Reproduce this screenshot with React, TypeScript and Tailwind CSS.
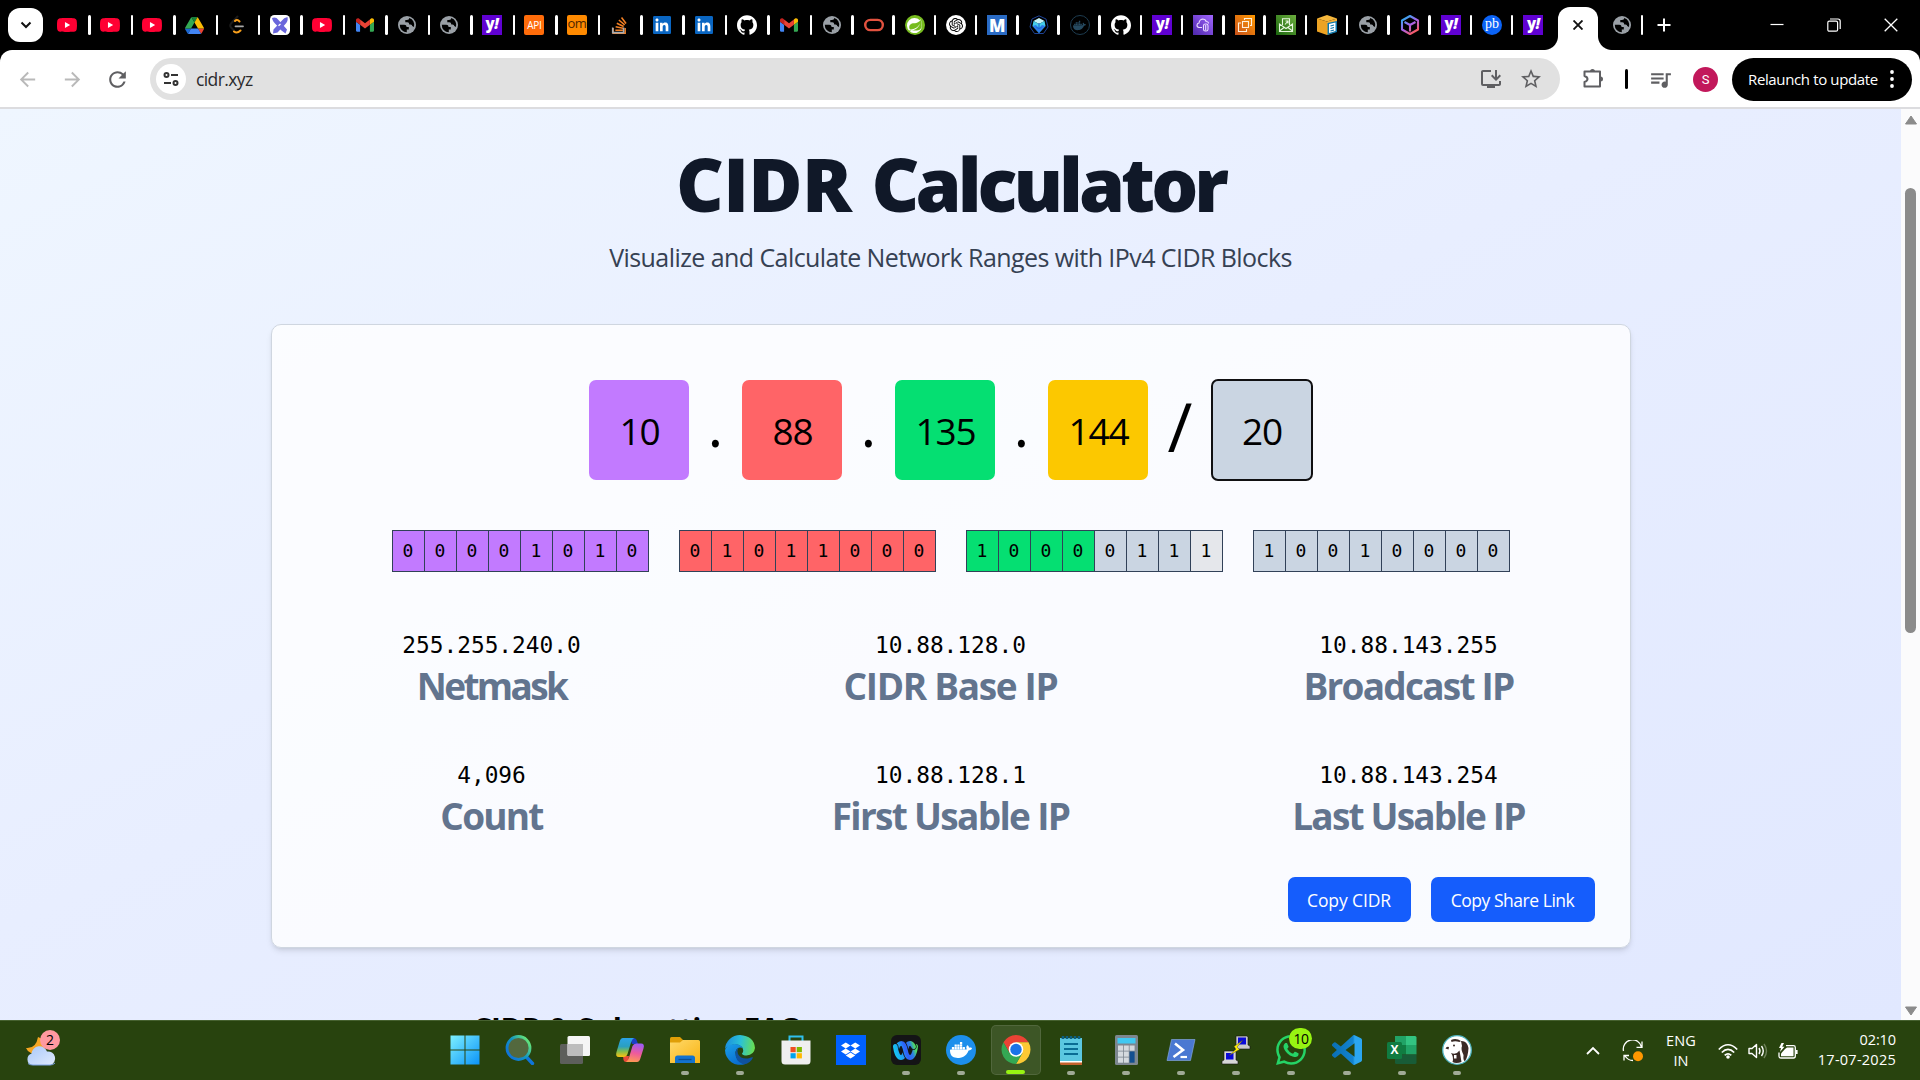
import type { ReactNode } from "react";
import {
  SiYoutube,
  SiStackoverflow,
  SiLinkedin,
  SiGithub,
  SiOracle,
  SiSpring,
  SiOpenai,
  SiDocker,
  SiDropbox,
  SiWebex,
  SiWhatsapp,
} from "react-icons/si";
import { MdInstallDesktop, MdStarBorder, MdQueueMusic, MdRefresh, MdArrowBack, MdArrowForward } from "react-icons/md";

/* ---------- tab favicons ---------- */

function YouTube() {
  return (
    <span className="relative flex size-5 items-center justify-center">
      <span className="absolute h-2 w-3 bg-white" />
      <SiYoutube className="relative size-5 text-[#ff0033]" />
    </span>
  );
}

function Drive() {
  return (
    <svg viewBox="0 0 87.3 78" className="h-[17px] w-[19px]">
      <path d="m6.6 66.85 3.85 6.65c.8 1.4 1.95 2.5 3.3 3.3l13.75-23.8h-27.5c0 1.55.4 3.1 1.2 4.5z" fill="#1967d2" />
      <path d="m43.65 25-13.75-23.8c-1.35.8-2.5 1.9-3.3 3.3l-25.4 44a9.06 9.06 0 0 0 -1.2 4.5h27.5z" fill="#34a853" />
      <path d="m73.55 76.8c1.35-.8 2.5-1.9 3.3-3.3l1.6-2.75 7.65-13.25c.8-1.4 1.2-2.95 1.2-4.5h-27.5l5.85 11.5z" fill="#ea4335" />
      <path d="m43.65 25 13.75-23.8c-1.35-.8-2.9-1.2-4.5-1.2h-18.5c-1.6 0-3.15.45-4.5 1.2z" fill="#188038" />
      <path d="m59.8 53h-32.3l-13.75 23.8c1.35.8 2.9 1.2 4.5 1.2h50.8c1.6 0 3.15-.45 4.5-1.2z" fill="#4285f4" />
      <path d="m73.4 26.5-12.7-22c-.8-1.4-1.95-2.5-3.3-3.3l-13.75 23.8 16.15 28h27.45c0-1.55-.4-3.1-1.2-4.5z" fill="#fbbc04" />
    </svg>
  );
}

function Leet() {
  return (
    <svg viewBox="0 0 20 20" className="size-5" fill="none" strokeLinecap="round">
      <path d="M10.5 1.5 4 8.5Q2.500 10.500 4 12.500L7 15.500" stroke="#1c1c1c" strokeWidth="2" />
      <path d="M8 6Q10 3.800 12.500 6.500M7 16.500Q10 19 13.500 15.500" stroke="#f89f1b" strokeWidth="2" />
      <path d="M8.500 11.300H16" stroke="#a8a8a8" strokeWidth="1.800" />
    </svg>
  );
}

function Excalidraw() {
  return (
    <svg viewBox="0 0 20 20" className="size-5">
      <rect width="20" height="20" rx="4.500" fill="#fff" />
      <path d="M2 3Q6 1.500 8.500 5L17 14.500 15.500 18.500Q9.500 14.500 7 10.500 2.500 6.500 2 3Z" fill="#6965db" />
      <path d="M17.500 2Q18.500 6 15 9.500L7.500 17.500 3 18.500 3.500 14.500 11.500 6Q14 2.500 17.500 2Z" fill="#6965db" />
      <path d="M8.500 10.800 10.500 9" stroke="#fff" strokeWidth="1.200" />
    </svg>
  );
}

function Gmail() {
  return (
    <svg viewBox="52 42 88 66" className="h-[14px] w-[18px]">
      <path fill="#4285f4" d="M58 108h14V74L52 59v43c0 3.320 2.690 6 6 6" />
      <path fill="#34a853" d="M120 108h14c3.320 0 6-2.690 6-6V59l-20 15" />
      <path fill="#fbbc04" d="M120 48v26l20-15v-8c0-7.420-8.470-11.650-14.400-7.200" />
      <path fill="#ea4335" d="M72 74V48l24 18 24-18v26L96 92" />
      <path fill="#c5221f" d="M52 51v8l20 15V48l-5.600-4.200c-5.940-4.450-14.400-.22-14.400 7.200" />
    </svg>
  );
}

function Globe() {
  return (
    <svg viewBox="0 0 20 20" className="size-5">
      <circle cx="10" cy="10" r="9" fill="#9aa0a6" />
      <path d="M2.800 9.700H7.200Q9.600 9.700 9.600 12H11.800V14.400H9.800V17.300A7.300 7.300 0 0 1 2.800 9.700Z" fill="#000" />
      <path d="M12.300 3Q12.200 5 10 5H8.300V7.300H10.300Q12.300 7.300 12.300 9.500H13.600Q15.200 9.500 15.200 11L17 12A7.400 7.400 0 0 0 12.300 3Z" fill="#000" />
    </svg>
  );
}

function Yahoo() {
  return (
    <span className="flex size-5 items-center justify-center bg-[#6001d2] font-['Open_Sans',sans-serif] text-[15px] font-extrabold leading-none tracking-[-0.5px] text-white">
      <span className="-mt-1">y</span>
      <span className="-mt-1 italic">!</span>
    </span>
  );
}

function Api() {
  return (
    <span className="flex size-5 items-center justify-center rounded-[2px] bg-[#ff6c0a] text-[10px] leading-none tracking-[-0.3px] text-white">
      API
    </span>
  );
}

function Om() {
  return (
    <span className="flex size-5 items-center justify-center rounded-[2px] bg-[#ff8a00] pb-[3px] text-[13px] leading-none tracking-[-0.6px] text-[#4c2500]">
      om
    </span>
  );
}

function StackOverflow() {
  return (
    <span className="relative flex size-5 items-center justify-center overflow-hidden">
      <SiStackoverflow className="size-[17px] text-[#f48024]" />
      <svg viewBox="0 0 20 20" className="absolute inset-0 size-5" fill="none">
        <path d="M3.700 12.600V17.600H14.600V12.600" stroke="#a7acb1" strokeWidth="1.600" />
      </svg>
    </span>
  );
}

function LinkedIn() {
  return (
    <span className="relative flex size-5 items-center justify-center">
      <span className="absolute size-4 bg-white" />
      <SiLinkedin className="relative size-[18px] text-[#0a66c2]" />
    </span>
  );
}

const GitHub = () => <SiGithub className="size-5 text-white" />;
const Oracle = () => <SiOracle className="size-5 text-[#e2523f]" />;

function Spring() {
  return (
    <span className="flex size-5 items-center justify-center rounded-full bg-[#77bc1f]">
      <SiSpring className="size-[15px] text-white" />
    </span>
  );
}

function OpenAi() {
  return (
    <span className="flex size-5 items-center justify-center rounded-full bg-white">
      <SiOpenai className="size-[14px] text-black" />
    </span>
  );
}

function LetterM() {
  return (
    <span className="flex size-5 items-center justify-center bg-[#2a6bc4] font-['Open_Sans',sans-serif] text-[17px] font-extrabold leading-none text-white">
      M
    </span>
  );
}

function Kube() {
  return (
    <svg viewBox="0 0 20 20" className="size-5">
      <path d="M10 .8 17 4 19 12 14.500 18.500H5.500L1 12 3 4Z" fill="none" stroke="#1d4396" strokeWidth="1" />
      <path d="M10 3 15.500 6 10 9 4.500 6Z" fill="#c7f3f7" />
      <path d="M4.500 6 10 9 15.500 6 16.500 11 10 18 3.500 11Z" fill="#45cdec" />
      <path d="M3.500 11 10 18 16.500 11 13 10 10 13 7 10Z" fill="#2d7be8" />
      <path d="M10 8V14M7.500 12Q10 15 12.500 12" stroke="#1c64d4" strokeWidth="1.100" fill="none" />
    </svg>
  );
}

function DarkDocker() {
  return (
    <span className="flex size-5 items-center justify-center rounded-full border border-[#1d3c50]">
      <SiDocker className="size-[13px] text-[#264a60]" />
    </span>
  );
}

function AwsCloud() {
  return (
    <svg viewBox="0 0 20 20" className="size-5" fill="none" stroke="#eadcff" strokeWidth="1.100">
      <rect width="20" height="20" fill="url(#awsPurple)" stroke="none" />
      <defs>
        <linearGradient id="awsPurple" x1="0" y1="1" x2="1" y2="0">
          <stop stopColor="#4d27aa" />
          <stop offset="1" stopColor="#a166ff" />
        </linearGradient>
      </defs>
      <path d="M9 12.500H6Q3.800 12 4 10 4.200 8.300 6 8 6.500 4.500 9.500 4 12.300 4 13.200 6.500 15.500 6.500 15.500 8.500" />
      <rect x="10.500" y="9" width="4.500" height="7" rx="1.800" />
      <path d="M12.700 10V15.500" />
    </svg>
  );
}

function AwsEc2() {
  return (
    <svg viewBox="0 0 20 20" className="size-5" fill="none" stroke="#fff1dd" strokeWidth="1.100">
      <defs>
        <linearGradient id="awsOrange" x1="0" y1="1" x2="1" y2="0">
          <stop stopColor="#c8511b" />
          <stop offset="1" stopColor="#ff9900" />
        </linearGradient>
      </defs>
      <rect width="20" height="20" fill="url(#awsOrange)" stroke="none" />
      <rect x="7.500" y="6.500" width="6" height="6" />
      <path d="M9.500 5V3.500H16.500V10.500H15M6 8H3.500V16.500H11.500V14" />
    </svg>
  );
}

function AwsMail() {
  return (
    <svg viewBox="0 0 20 20" className="size-5" fill="none" stroke="#e8f7e0" strokeWidth="1.100">
      <defs>
        <linearGradient id="awsGreen" x1="0" y1="1" x2="1" y2="0">
          <stop stopColor="#1b660f" />
          <stop offset="1" stopColor="#6cae3e" />
        </linearGradient>
      </defs>
      <rect width="20" height="20" fill="url(#awsGreen)" stroke="none" />
      <path d="M6.500 10V3.800H13.500V10M3.500 9V16.500H16.500V9L10 13.500ZM3.500 16 8 12.500M16.500 16 12 12.500M9 9.500 12 6M9.500 6H12V8.500" />
    </svg>
  );
}

function S3Box() {
  return (
    <svg viewBox="0 0 20 20" className="size-5">
      <path d="M0 3.500 10 0 20 3.500 10 6.500Z" fill="#f6b73c" />
      <path d="M0 3.500 10 6.500V20L0 16.500Z" fill="#eda323" />
      <path d="M10 6.500 20 3.500V16.500L10 20Z" fill="#f3b13a" />
      <path d="M10.500 8 20 6V17L10.500 20Z" fill="#0b76ad" />
      <path d="M12 9 18.500 7.500V16L12 18Z" fill="#fff" />
      <path d="M13.500 11 17 10M13.500 13.500 17 12.500M13.500 16 17 15" stroke="#0b76ad" strokeWidth="1.100" />
    </svg>
  );
}

function HexCube() {
  return (
    <svg viewBox="0 0 20 20" className="size-5" fill="none" stroke="url(#hexGrad)" strokeWidth="2.100" strokeLinejoin="round">
      <defs>
        <linearGradient id="hexGrad" gradientUnits="userSpaceOnUse" x1="3" y1="2" x2="15" y2="18">
          <stop stopColor="#23b4f0" />
          <stop offset="0.500" stopColor="#a463ee" />
          <stop offset="1" stopColor="#ff5a5a" />
        </linearGradient>
      </defs>
      <path d="M10 1 18 5.500V14.500L10 19 2 14.500V5.500ZM4.500 7 10 10 15.500 7M10 10V16.500" />
    </svg>
  );
}

function Pb() {
  return (
    <span className="flex size-5 items-center justify-center rounded-full bg-[#0b63f6] pb-[3px] font-['Liberation_Serif',serif] text-[14px] leading-none text-white">
      pb
    </span>
  );
}

const wideTabs = [YouTube, YouTube, YouTube, Drive, Leet, Excalidraw, YouTube, Gmail, Globe, Globe, Yahoo, Api, Om, StackOverflow, LinkedIn, LinkedIn, GitHub, Gmail];
const narrowTabs = [Globe, Oracle, Spring, OpenAi, LetterM, Kube, DarkDocker, GitHub, Yahoo, AwsCloud, AwsEc2, AwsMail, S3Box, Globe, HexCube, Yahoo, Pb, Yahoo];

const Separator = () => <span className="h-5 w-[2.5px] rounded-full bg-white" />;

function TabStrip() {
  return (
    <div className="flex h-[50px] items-center bg-black">
      <div className="ml-2 mr-[5.200px] flex h-[34px] w-[35px] items-center justify-center rounded-[12px] bg-white">
        <svg viewBox="0 0 12 12" className="size-3" fill="none" stroke="#111" strokeWidth="2">
          <path d="M1.500 3.500 6 8 10.500 3.500" />
        </svg>
      </div>
      {wideTabs.map((Icon, i) => (
        <div key={i} className="flex w-[42.460px] shrink-0 items-center justify-between pl-[9.200px]">
          <span className="flex size-5 items-center justify-center">
            <Icon />
          </span>
          <Separator />
        </div>
      ))}
      {narrowTabs.map((Icon, i) => (
        <div key={i} className="flex w-[41.240px] shrink-0 items-center justify-between pl-[10px]">
          <span className="flex size-5 items-center justify-center">
            <Icon />
          </span>
          {i < narrowTabs.length - 1 && <Separator />}
        </div>
      ))}
      <div className="-ml-[11px] flex h-full items-end">
        <span className="size-[14px] bg-[radial-gradient(circle_at_0_0,#000_13.500px,#fff_14.500px)]" />
        <div className="flex h-[43px] w-10 items-center justify-center rounded-t-[12px] bg-white pb-[7px]">
          <svg viewBox="0 0 10 10" className="size-[10px]" stroke="#111" strokeWidth="1.900">
            <path d="M.5.5 9.500 9.500M9.500.5.5 9.500" />
          </svg>
        </div>
        <span className="size-[14px] bg-[radial-gradient(circle_at_100%_0,#000_13.500px,#fff_14.500px)]" />
      </div>
      <div className="flex items-center gap-[9px]">
        <Globe />
        <Separator />
      </div>
      <svg viewBox="0 0 14 14" className="ml-[14px] size-[14px]" stroke="#fff" strokeWidth="2">
        <path d="M7 .5V13.500M.5 7H13.500" />
      </svg>
      <div className="ml-auto mr-[22px] flex items-center gap-[43px]">
        <svg viewBox="0 0 14 14" className="size-[14px]" stroke="#fff" strokeWidth="1.200">
          <path d="M.5 6.500H13.500" />
        </svg>
        <svg viewBox="0 0 14 14" className="size-[14px]" fill="none" stroke="#fff" strokeWidth="1.200">
          <rect x="0.800" y="3.200" width="9.800" height="10" rx="1.500" />
          <path d="M3 1H11Q13.200 1 13.200 3.200V11" />
        </svg>
        <svg viewBox="0 0 14 14" className="size-[14px]" stroke="#fff" strokeWidth="1.300">
          <path d="M.7.7 13.300 13.300M13.300.7.7 13.300" />
        </svg>
      </div>
    </div>
  );
}

function Toolbar() {
  return (
    <div className="bg-black">
      <div className="flex h-[59px] items-center rounded-t-[12px] border-b-2 border-[#dcdcdf] bg-white pl-4 pt-px text-[#5f5f62]">
        <MdArrowBack className="size-[23px] text-[#b9b9b9]" />
        <MdArrowForward className="ml-[22px] size-[23px] text-[#b9b9b9]" />
        <MdRefresh className="ml-[21px] size-[25px]" />
        <div className="ml-5 flex h-[42px] w-[1410px] items-center rounded-full bg-[#e1e1e1] pl-[6px] pr-[17px]">
          <span className="flex size-[30px] items-center justify-center rounded-full bg-white">
            <svg viewBox="0 0 16 16" className="size-4" fill="none" stroke="#333" strokeWidth="2">
              <circle cx="3.500" cy="4" r="2" />
              <path d="M8 4H15M1 12H8" />
              <circle cx="12.500" cy="12" r="2" />
            </svg>
          </span>
          <span className="ml-[10px] pt-[2px] text-[17.500px] leading-none tracking-[-0.600px] text-[#2b2b2e]">cidr.xyz</span>
          <MdInstallDesktop className="ml-auto size-6" />
          <MdStarBorder className="ml-4 size-6" />
        </div>
        <svg viewBox="0 0 22 22" className="ml-[22px] size-[22px]" fill="none" stroke="currentColor" strokeWidth="2">
          <path d="M2.500 3.500H18V18.500H2.500V14Q5.500 13 5.500 11T2.500 8Z" strokeLinejoin="round" />
          <path d="M8 3.500A2.500 2.500 0 0 1 13 3.500ZM18.500 8.500A2.500 2.500 0 0 1 18.500 13.500Z" fill="currentColor" stroke="none" />
        </svg>
        <span className="ml-[21px] h-5 w-[3px] rounded-full bg-black" />
        <MdQueueMusic className="ml-[20px] size-[25px]" />
        <span className="ml-[20px] flex size-[25px] items-center justify-center rounded-full bg-[#c2185b] font-[Roboto,sans-serif] text-[13px] leading-none text-white">
          S
        </span>
        <div className="ml-[14px] flex h-[43px] w-[180px] items-center rounded-full bg-black pl-4">
          <span className="whitespace-nowrap text-[15px] leading-none tracking-[-0.370px] text-white">Relaunch to update</span>
          <svg viewBox="0 0 4 20" className="ml-[12px] h-5 w-1" fill="#fff">
            <circle cx="2" cy="3" r="1.900" />
            <circle cx="2" cy="10" r="1.900" />
            <circle cx="2" cy="17" r="1.900" />
          </svg>
        </div>
      </div>
    </div>
  );
}

/* ---------- page ---------- */

const octets = [
  { value: "10", bg: "bg-[#c27aff]" },
  { value: "88", bg: "bg-[#ff6467]" },
  { value: "135", bg: "bg-[#05df72]" },
  { value: "144", bg: "bg-[#fcc800]" },
];

const P = "bg-[#c27aff]";
const R = "bg-[#ff6467]";
const G = "bg-[#05df72]";
const S = "bg-[#cad5e2]";
const bits: { digits: string; colors: string[] }[] = [
  { digits: "00001010", colors: [P, P, P, P, P, P, P, P] },
  { digits: "01011000", colors: [R, R, R, R, R, R, R, R] },
  { digits: "10000111", colors: [G, G, G, G, S, S, S, "bg-[#e5e7eb]"] },
  { digits: "10010000", colors: [S, S, S, S, S, S, S, S] },
];

const stats = [
  ["255.255.240.0", "Netmask", "tracking-[-2.650px]"],
  ["10.88.128.0", "CIDR Base IP", "tracking-[-1.330px]"],
  ["10.88.143.255", "Broadcast IP", "tracking-[-1.770px]"],
  ["4,096", "Count", "tracking-[-1.780px]"],
  ["10.88.128.1", "First Usable IP", "tracking-[-1.690px]"],
  ["10.88.143.254", "Last Usable IP", "tracking-[-1.800px]"],
];

function Calculator() {
  return (
    <section className="mt-[51px] flex h-[624px] w-[1360px] shrink-0 flex-col rounded-[10px] border border-[#cfd6e0] bg-white/80 pt-[55px] shadow-md">
      <div className="flex items-start justify-center">
        {octets.map((o, i) => (
          <div key={o.value} className="flex items-start">
            <div className={`flex size-[100px] items-center justify-center rounded-[7px] pl-px text-[37px] leading-none tracking-[-1.200px] text-black ${o.bg}`}>
              {o.value}
            </div>
            {i < 3 ? (
              <span className="w-[53px] text-center text-[60px] leading-[88px]">.</span>
            ) : (
              <span className="w-[64px] text-center text-[68px] leading-[91px]">/</span>
            )}
          </div>
        ))}
        <div className="flex size-[100px] items-center justify-center rounded-[6px] bg-[#cad5e2] text-[37px] leading-none tracking-[-1.200px] text-black outline-2 -outline-offset-1 outline-[#101012]">
          20
        </div>
      </div>

      <div className="mt-[50px] flex justify-center gap-[30px] font-['DejaVu_Sans_Mono',monospace] text-[18px]">
        {bits.map((b, i) => (
          <div key={i} className="flex h-[42px] w-[257px] border border-[#314158]">
            {b.digits.split("").map((d, j) => (
              <span key={j} className={`flex flex-1 items-center justify-center border-[#314158] leading-none not-first:border-l ${b.colors[j]}`}>
                {d}
              </span>
            ))}
          </div>
        ))}
      </div>

      <div className="mt-[59px] grid grid-cols-[440px_478px_438px] gap-y-14">
        {stats.map(([value, label, tracking]) => (
          <div key={label} className="text-center">
            <p className="font-['DejaVu_Sans_Mono',monospace] text-[22.800px] leading-7">{value}</p>
            <p className={`mt-[7px] text-[37px] font-bold leading-[39px] text-[#62748e] ${tracking}`}>{label}</p>
          </div>
        ))}
      </div>

      <div className="mr-[35px] mt-[42px] flex justify-end gap-5 text-[17.500px] leading-none text-white">
        <button className="h-[45px] w-[123px] rounded-[7px] bg-[#155dfc] pt-[2px] tracking-[-0.100px]">Copy CIDR</button>
        <button className="h-[45px] w-[164px] whitespace-nowrap rounded-[7px] bg-[#155dfc] pt-[2px] tracking-[-0.460px]">Copy Share Link</button>
      </div>
    </section>
  );
}

function Page() {
  return (
    <div className="flex h-[911px]">
      <main className="flex w-[1901px] flex-col items-center overflow-hidden bg-[linear-gradient(to_bottom_right,#eff6ff,#e8eeff_45%,#e1e8ff)]">
        <h1 className="mt-[38px] shrink-0 text-[74px] font-extrabold leading-[74px] text-[#101828]">
          <span className="tracking-[-0.700px]">CIDR</span>
          <span className="tracking-[1px]"> </span>
          <span className="tracking-[-4px]">Calculator</span>
        </h1>
        <p className="mt-[20px] shrink-0 text-[25px] leading-8 tracking-[-0.570px] text-[#364153]">
          Visualize and Calculate Network Ranges with IPv4 CIDR Blocks
        </p>
        <Calculator />
        <h2 className="mt-[61px] w-[956px] shrink-0 text-[30px] font-bold leading-10 tracking-[-0.580px] text-black">CIDR &amp; Subnetting FAQ</h2>
      </main>
      <aside className="flex w-[19px] flex-col items-center bg-[#fbfbfc] pt-[6px]">
        <svg viewBox="0 0 14 10" className="h-[10px] w-[14px]" fill="#8b8b8b" stroke="#8b8b8b" strokeLinejoin="round">
          <path d="M7 1 12.500 9H1.500Z" />
        </svg>
        <span className="mt-[63px] h-[445px] w-[11px] rounded-full bg-[#8b8b8b]" />
        <svg viewBox="0 0 14 10" className="mb-1 mt-auto h-[10px] w-[14px]" fill="#8b8b8b" stroke="#8b8b8b" strokeLinejoin="round">
          <path d="M7 9 12.500 1H1.500Z" />
        </svg>
      </aside>
    </div>
  );
}

/* ---------- taskbar icons ---------- */

function StartIcon() {
  return (
    <svg viewBox="0 0 30 30" className="size-[30px]">
      <defs>
        <linearGradient id="win" x1="0" y1="0" x2="1" y2="1" gradientUnits="objectBoundingBox">
          <stop stopColor="#7df0ff" />
          <stop offset="1" stopColor="#0b93f8" />
        </linearGradient>
      </defs>
      <path fill="url(#win)" d="M.5.5H14.500V14.500H.5ZM15.500.5H29.500V14.500H15.500ZM.5 15.500H14.500V29.500H.5ZM15.500 15.500H29.500V29.500H15.500Z" />
    </svg>
  );
}

function SearchIcon() {
  return (
    <svg viewBox="0 0 30 30" className="size-[30px]" fill="none" strokeLinecap="round">
      <defs>
        <linearGradient id="lens" x1="0.100" y1="0.800" x2="0.900" y2="0.200">
          <stop stopColor="#0f75d8" />
          <stop offset="0.500" stopColor="#1295c0" />
          <stop offset="1" stopColor="#5fe07d" />
        </linearGradient>
      </defs>
      <path d="M21.500 22 27.500 28.500" stroke="#0f75d8" strokeWidth="3.400" />
      <circle cx="13.500" cy="13" r="11.500" fill="#ffffff33" stroke="url(#lens)" strokeWidth="2.800" />
    </svg>
  );
}

function TaskViewIcon() {
  return (
    <svg viewBox="0 0 30 30" className="size-[30px]">
      <rect x="0" y="9" width="23" height="20" rx="1.500" fill="#5d5f5b" />
      <rect x="7.500" y="1" width="22.500" height="20" rx="1.500" fill="#f5f5f5" />
      <path d="M7.500 9H23V21H9Q7.500 21 7.500 19.500Z" fill="#bdbdbd" />
    </svg>
  );
}

function CopilotIcon() {
  return (
    <svg viewBox="0 0 30 30" className="size-[30px]">
      <defs>
        <linearGradient id="cpA" x1="0" y1="0" x2="0" y2="1">
          <stop stopColor="#2ba4e8" />
          <stop offset="0.450" stopColor="#2a9fc0" />
          <stop offset="0.700" stopColor="#7fbd4e" />
          <stop offset="1" stopColor="#ffc20e" />
        </linearGradient>
        <linearGradient id="cpB" x1="0.500" y1="0" x2="0.300" y2="1">
          <stop stopColor="#a05bf2" />
          <stop offset="0.500" stopColor="#ee5a9c" />
          <stop offset="1" stopColor="#ff9a52" />
        </linearGradient>
      </defs>
      <path d="M15 3H18.500Q21 3 22 6L23 9H17Z" fill="#1c3fc6" />
      <path d="M8 21H14L13 27H11Q9 27 8.500 25Z" fill="#e84a3a" />
      <path d="M8 3H19Q17 4 16 7.500L12.500 19Q11.500 22 8.500 22H4Q0 22 1.500 17L4.500 7Q5.500 3 8 3Z" fill="url(#cpA)" />
      <path d="M22 27H11Q13 26 14 22.500L17.500 11Q18.500 8.500 21.500 8.500H26Q30 8.500 28.500 13.500L25.500 23Q24.500 27 22 27Z" fill="url(#cpB)" />
    </svg>
  );
}

function FolderIcon() {
  return (
    <svg viewBox="0 0 30 30" className="size-[30px]">
      <defs>
        <linearGradient id="folder" x1="0" y1="0" x2="1" y2="1">
          <stop stopColor="#ffd96a" />
          <stop offset="1" stopColor="#f9b413" />
        </linearGradient>
      </defs>
      <path d="M0 3.500Q0 2 1.500 2H10L13 5V9H0Z" fill="#e09f07" />
      <path d="M0 7.500H10L13 5H28.500Q30 5 30 6.500V28H0Z" fill="url(#folder)" />
      <path d="M5 28V23Q5 20.500 7.500 20.500H22.500Q25 20.500 25 23V28Z" fill="#1373cf" />
      <path d="M8.500 24.500H21.500" stroke="#0b4f93" strokeWidth="1.300" />
    </svg>
  );
}

function EdgeIcon() {
  return (
    <svg viewBox="0 0 30 30" className="size-[30px]">
      <defs>
        <linearGradient id="edgeTop" x1="0" y1="0.500" x2="1" y2="0.600">
          <stop stopColor="#1b8fe0" />
          <stop offset="0.500" stopColor="#2bc2d6" />
          <stop offset="1" stopColor="#6be04b" />
        </linearGradient>
        <linearGradient id="edgeLeft" x1="0" y1="0" x2="0.500" y2="1">
          <stop stopColor="#1aa0e8" />
          <stop offset="1" stopColor="#0a6fd0" />
        </linearGradient>
      </defs>
      <path d="M0 14A15 15 0 0 1 15 0Q29 1 30 13 29 20 21.500 20.500 17.500 20.500 17 18.500 19.500 16 17 12 13.500 8.500 8.500 9.500 2 11 0 14Z" fill="url(#edgeTop)" />
      <path d="M0 15Q2 9 9.500 9 15 9 18 13 12 11 10.500 17 10 26 20 29A15 15 0 0 1 0 15Z" fill="url(#edgeLeft)" />
      <path d="M10.500 17Q9.500 26 18.500 29.600 25.500 28.500 28 22.500 27 22 24 23.300 16 24.500 13 19Q11.500 16 13.500 13 11 14 10.500 17Z" fill="#0f529f" />
    </svg>
  );
}

function StoreIcon() {
  return (
    <svg viewBox="0 0 30 30" className="size-[30px]">
      <path d="M8.500 6.500V1.500H21.500V6.500" fill="none" stroke="#2fc0ec" strokeWidth="2" />
      <path d="M.5 5.500H29.500V26Q29.500 29.500 26 29.500H4Q.5 29.500.5 26Z" fill="#efefef" />
      <rect x="9.500" y="12" width="5.200" height="5.200" fill="#f04e23" />
      <rect x="15.700" y="12" width="5.200" height="5.200" fill="#7eb900" />
      <rect x="9.500" y="18.200" width="5.200" height="5.200" fill="#00a3ee" />
      <rect x="15.700" y="18.200" width="5.200" height="5.200" fill="#ffb800" />
    </svg>
  );
}

function DropboxIcon() {
  return (
    <span className="flex size-[30px] items-center justify-center bg-[#0061ff]">
      <SiDropbox className="size-[19px] text-white" />
    </span>
  );
}

function WebexIcon() {
  return (
    <span className="flex size-[30px] items-center justify-center rounded-[6px] bg-[#141416]">
      <svg className="size-0">
        <defs>
          <linearGradient id="webex" gradientUnits="userSpaceOnUse" x1="1" y1="14" x2="23" y2="7">
            <stop stopColor="#15c8f2" />
            <stop offset="0.300" stopColor="#1f9df5" />
            <stop offset="0.500" stopColor="#2f5ffa" />
            <stop offset="0.720" stopColor="#2b7be8" />
            <stop offset="0.900" stopColor="#4fdc64" />
          </linearGradient>
        </defs>
      </svg>
      <SiWebex className="size-[25px] shrink-0" fill="url(#webex)" />
    </span>
  );
}

function DockerIcon() {
  return (
    <span className="flex size-[30px] items-center justify-center rounded-full bg-[#1d8fec]">
      <SiDocker className="size-[22px] text-white" />
    </span>
  );
}

function ChromeIcon() {
  return (
    <svg viewBox="0 0 48 48" className="size-[30px]">
      <path d="M3.220 12A24 24 0 0 1 44.780 12H24L13.600 30Z" fill="#ea4335" />
      <path d="M44.780 12A24 24 0 0 1 24 48L34.400 30 24 12Z" fill="#fcc934" />
      <path d="M24 48A24 24 0 0 1 3.220 12L13.600 30H34.400Z" fill="#34a853" />
      <circle cx="24" cy="24" r="12" fill="#fff" />
      <circle cx="24" cy="24" r="9.500" fill="#1a73e8" />
    </svg>
  );
}

function NotepadIcon() {
  return (
    <svg viewBox="0 0 30 30" className="size-[30px]">
      <path d="M4 26H26V30H5.500Q4 30 4 28.500Z" fill="#c4622d" />
      <path d="M4 24H26V27.500H4Z" fill="#fff" />
      <path d="M4 3H26V26H4Z" fill="#5bc7e0" />
      <path d="M7 1V4M11 1V4M15 1V4M19 1V4M23 1V4" stroke="#0c5f80" strokeWidth="2.600" />
      <path d="M8 9H22M8 14H22M8 19H22" stroke="#0a6d94" strokeWidth="1.800" />
    </svg>
  );
}

function CalcIcon() {
  const keys: ReactNode[] = [];
  for (let r = 0; r < 3; r++) {
    for (let c = 0; c < 3; c++) {
      if (c < 2 || r === 0) keys.push(<rect key={`${r}${c}`} x={7 + c * 5.800} y={10.500 + r * 6} width="5" height="5.200" fill="#d4dade" />);
    }
  }
  return (
    <svg viewBox="0 0 30 30" className="size-[30px]">
      <rect x="4" y="0" width="23" height="30" rx="1.500" fill="#7d8790" />
      <rect x="6.500" y="3" width="18" height="5.500" fill="#3fc9f2" />
      {keys}
      <rect x="18.600" y="16.500" width="5" height="11.200" fill="#134f8f" />
    </svg>
  );
}

function PowerShellIcon() {
  return (
    <svg viewBox="0 0 30 30" className="size-[30px]" fill="none">
      <path d="M5.500 4.500H29L24.500 25.500H1Z" fill="#4a78d2" stroke="#8fb0ea" strokeWidth="0.600" />
      <path d="M9 8.500 17 15 7.500 22" stroke="#fff" strokeWidth="2.600" />
      <path d="M14.500 22H21" stroke="#fff" strokeWidth="2.200" />
    </svg>
  );
}

function PuttyIcon() {
  return (
    <svg viewBox="0 0 30 30" className="size-[30px]">
      <path d="M15 1H26L27 2V10L29 11V14H14V11L15 10Z" fill="#c9c9c9" stroke="#111" strokeWidth="0.600" />
      <rect x="17" y="2.500" width="8" height="7" fill="#0a0ad8" />
      <path d="M3 16H14L15 17V25L17 26V29H1V26L3 25Z" fill="#d6d6d6" stroke="#111" strokeWidth="0.600" />
      <rect x="5" y="18" width="7.500" height="6.500" fill="#0a0ad8" />
      <path d="M22 5 13 11.500 15 14 8 20.500 18.500 14.500 16 12Z" fill="#ffee00" stroke="#333" strokeWidth="0.400" />
    </svg>
  );
}

function WhatsappIcon() {
  return (
    <span className="relative">
      <SiWhatsapp className="size-[30px] text-[#25d366]" />
      <span className="absolute -top-[7px] left-[13px] flex h-[21px] w-[23px] items-center justify-center rounded-full bg-[#97f412] text-[14px] leading-none tracking-[-0.500px] text-black">
        10
      </span>
    </span>
  );
}

function VsCodeIcon() {
  return (
    <svg viewBox="0 0 24 24" className="size-[30px]">
      <defs>
        <linearGradient id="code" x1="0" y1="0" x2="1" y2="0">
          <stop stopColor="#0a6fb5" />
          <stop offset="0.700" stopColor="#1283cf" />
          <stop offset="0.760" stopColor="#2ba6f0" />
        </linearGradient>
      </defs>
      <path
        fill="url(#code)"
        d="M23.150 2.587L18.210.21a1.494 1.494 0 0 0-1.705.29l-9.460 8.630-4.120-3.128a.999.999 0 0 0-1.276.057L.327 7.261A1 1 0 0 0 .326 8.740L3.899 12 .326 15.260a1 1 0 0 0 .001 1.479L1.650 17.940a.999.999 0 0 0 1.276.057l4.120-3.128 9.460 8.630a1.492 1.492 0 0 0 1.704.29l4.942-2.377A1.500 1.500 0 0 0 24 20.060V3.939a1.500 1.500 0 0 0-.85-1.352zm-5.146 14.861L10.826 12l7.178-5.448v10.896z"
      />
    </svg>
  );
}

function ExcelIcon() {
  return (
    <span className="relative flex size-[30px] items-center">
      <svg viewBox="0 0 30 30" className="absolute inset-0 size-[30px]">
        <path d="M8 1H19V10H8Z" fill="#21a366" />
        <path d="M19 1H28Q29.500 1 29.500 2.500V10H19Z" fill="#33c481" />
        <path d="M8 10H19V19.500H8Z" fill="#107c41" />
        <path d="M19 10H29.500V19.500H19Z" fill="#21a366" />
        <path d="M8 19.500H29.500V27.500Q29.500 29 28 29H9.500Q8 29 8 27.500Z" fill="#185c37" />
      </svg>
      <span className="relative flex h-[17px] w-[15.500px] items-center justify-center rounded-[1.500px] bg-[#107c41] text-[12px] font-bold leading-none text-white">
        X
      </span>
    </span>
  );
}

function DbeaverIcon() {
  return (
    <svg viewBox="0 0 30 30" className="size-[30px]">
      <circle cx="15" cy="15" r="14.300" fill="#fff" stroke="#4fb3c0" strokeWidth="1.300" />
      <path d="M9 5Q14 2.500 19 6L17.500 7Q13 5.500 9.500 7Z" fill="#3a2a26" />
      <path d="M19 6Q25 5.500 26.500 13 26 22 23 26 21 26 21.500 20 18.500 14 20 11Z" fill="#3a2a26" />
      <path d="M3.500 13.500Q4.500 11 7 12L6.500 14.500Z" fill="#3a2a26" />
      <path d="M9 18Q14 20.500 17.500 15.500L19.500 27Q14 29 10.500 27 12 22 9 18Z" fill="#3a2a26" />
      <circle cx="12" cy="10.500" r="1" fill="#3a2a26" />
      <path d="M12 20H14.500V23.500H12Z" fill="#fff" />
    </svg>
  );
}

const apps: { Icon: () => ReactNode; running?: boolean; active?: boolean }[] = [
  { Icon: StartIcon },
  { Icon: SearchIcon },
  { Icon: TaskViewIcon },
  { Icon: CopilotIcon },
  { Icon: FolderIcon, running: true },
  { Icon: EdgeIcon, running: true },
  { Icon: StoreIcon },
  { Icon: DropboxIcon },
  { Icon: WebexIcon, running: true },
  { Icon: DockerIcon, running: true },
  { Icon: ChromeIcon, active: true },
  { Icon: NotepadIcon, running: true },
  { Icon: CalcIcon, running: true },
  { Icon: PowerShellIcon, running: true },
  { Icon: PuttyIcon, running: true },
  { Icon: WhatsappIcon, running: true },
  { Icon: VsCodeIcon, running: true },
  { Icon: ExcelIcon, running: true },
  { Icon: DbeaverIcon, running: true },
];

function Weather() {
  return (
    <div className="relative ml-[25px] h-[30px] w-8">
      <svg viewBox="0 0 32 30" className="h-[30px] w-8">
        <defs>
          <linearGradient id="cloud" x1="0" y1="0" x2="1" y2="1">
            <stop stopColor="#a9c8fa" />
            <stop offset="1" stopColor="#dfeafc" />
          </linearGradient>
        </defs>
        <path d="M13 1Q22 4 20 12 15 20 6 17 2 15 1 12 11 13 13 1Z" fill="#f6a623" />
        <path d="M7 29A6 6 0 0 1 6.500 17.500 8 8 0 0 1 22 15.500 7 7 0 0 1 25.500 29Z" fill="url(#cloud)" />
        <path d="M3 27.500Q5 29 8 29H25Q28 29 30 27" stroke="#7ea4e8" fill="none" />
      </svg>
      <span className="absolute -top-[6px] left-[15px] flex size-5 items-center justify-center rounded-full bg-[#ff99a0] text-[14px] leading-none text-black">
        2
      </span>
    </div>
  );
}

function Taskbar() {
  return (
    <div className="flex h-[60px] items-center border-t border-[#46612f] bg-[#28430e] text-white">
      <Weather />
      <div className="ml-[380.300px] flex h-full">
        {apps.map(({ Icon, running, active }, i) => (
          <div key={i} className="flex w-[55.120px] flex-col items-center pt-1">
            <div className={`flex h-[50px] w-[50px] flex-col items-center rounded-[5px] ${active ? "border border-white/10 bg-white/10 pt-[9px]" : "pt-[10px]"}`}>
              <Icon />
              {running && <span className="mt-[6px] h-1 w-2 rounded-full bg-[#a0aa96]" />}
              {active && <span className="mt-[6px] h-1 w-[19px] shrink-0 rounded-full bg-[#97f412]" />}
            </div>
          </div>
        ))}
      </div>
      <div className="ml-auto mr-6 flex items-center">
        <svg viewBox="0 0 14 9" className="h-[9px] w-[14px]" fill="none" stroke="#fff" strokeWidth="1.800">
          <path d="M1 8 7 2 13 8" />
        </svg>
        <svg viewBox="0 0 22 22" className="ml-[22px] size-[22px]" fill="none" stroke="#fff" strokeWidth="1.300">
          <path d="M1.500 11A9 9 0 0 1 19.500 7M20 1.500V7.300H14.500M11 20.500Q6 20.500 3 16M2 20.500V15.500H7" />
          <circle cx="16" cy="16.300" r="5" fill="#ff9800" stroke="none" />
        </svg>
        <div className="ml-[22px] w-[30px] text-center text-[14.500px] leading-5">
          <p className="tracking-[0.200px]">ENG</p>
          <p>IN</p>
        </div>
        <svg viewBox="0 0 20 16" className="ml-[22px] h-4 w-5" fill="none" stroke="#fff" strokeWidth="1.700">
          <path d="M.8 6.500Q10-3 19.200 6.500M3.800 9.500Q10 3.200 16.200 9.500M6.700 12.400Q10 9.200 13.300 12.400" />
          <circle cx="10" cy="14" r="1.800" fill="#fff" stroke="none" />
        </svg>
        <svg viewBox="0 0 20 16" className="ml-[10px] h-4 w-5" fill="none" stroke="#fff" strokeWidth="1.400">
          <path d="M1 5.500H4L8.500 1.500V14.500L4 10.500H1Z" strokeLinejoin="round" />
          <path d="M11 5Q13 8 11 11M13.500 3Q17 8 13.500 13" />
          <path d="M16 1Q21 8 16 15" stroke="#6d8058" />
        </svg>
        <svg viewBox="0 0 20 16" className="ml-[10px] h-4 w-5">
          <path d="M8 2.700H15.500Q17.300 2.700 17.300 4.500V13Q17.300 15 15.500 15H3Q1 15 1 13V9.500" fill="none" stroke="#fff" strokeWidth="1.300" />
          <path d="M9 4.500H15.500V13.200H3V10.500L7 6Z" fill="#fff" />
          <path d="M18 7H19.600V11H18Z" fill="#fff" />
          <path d="M3.500 0 1 5H3L2 9 6.500 3.800H4.200L6 0Z" fill="#fff" />
        </svg>
        <div className="ml-[19px] w-[79px] pb-px text-right text-[14.500px] leading-5">
          <p className="tracking-[-0.100px]">02:10</p>
          <p className="tracking-[0.250px]">17-07-2025</p>
        </div>
      </div>
    </div>
  );
}

export default function App() {
  return (
    <div className="flex h-[1080px] w-[1920px] flex-col overflow-hidden font-['Open_Sans','Noto_Sans',sans-serif]">
      <TabStrip />
      <Toolbar />
      <Page />
      <Taskbar />
    </div>
  );
}
